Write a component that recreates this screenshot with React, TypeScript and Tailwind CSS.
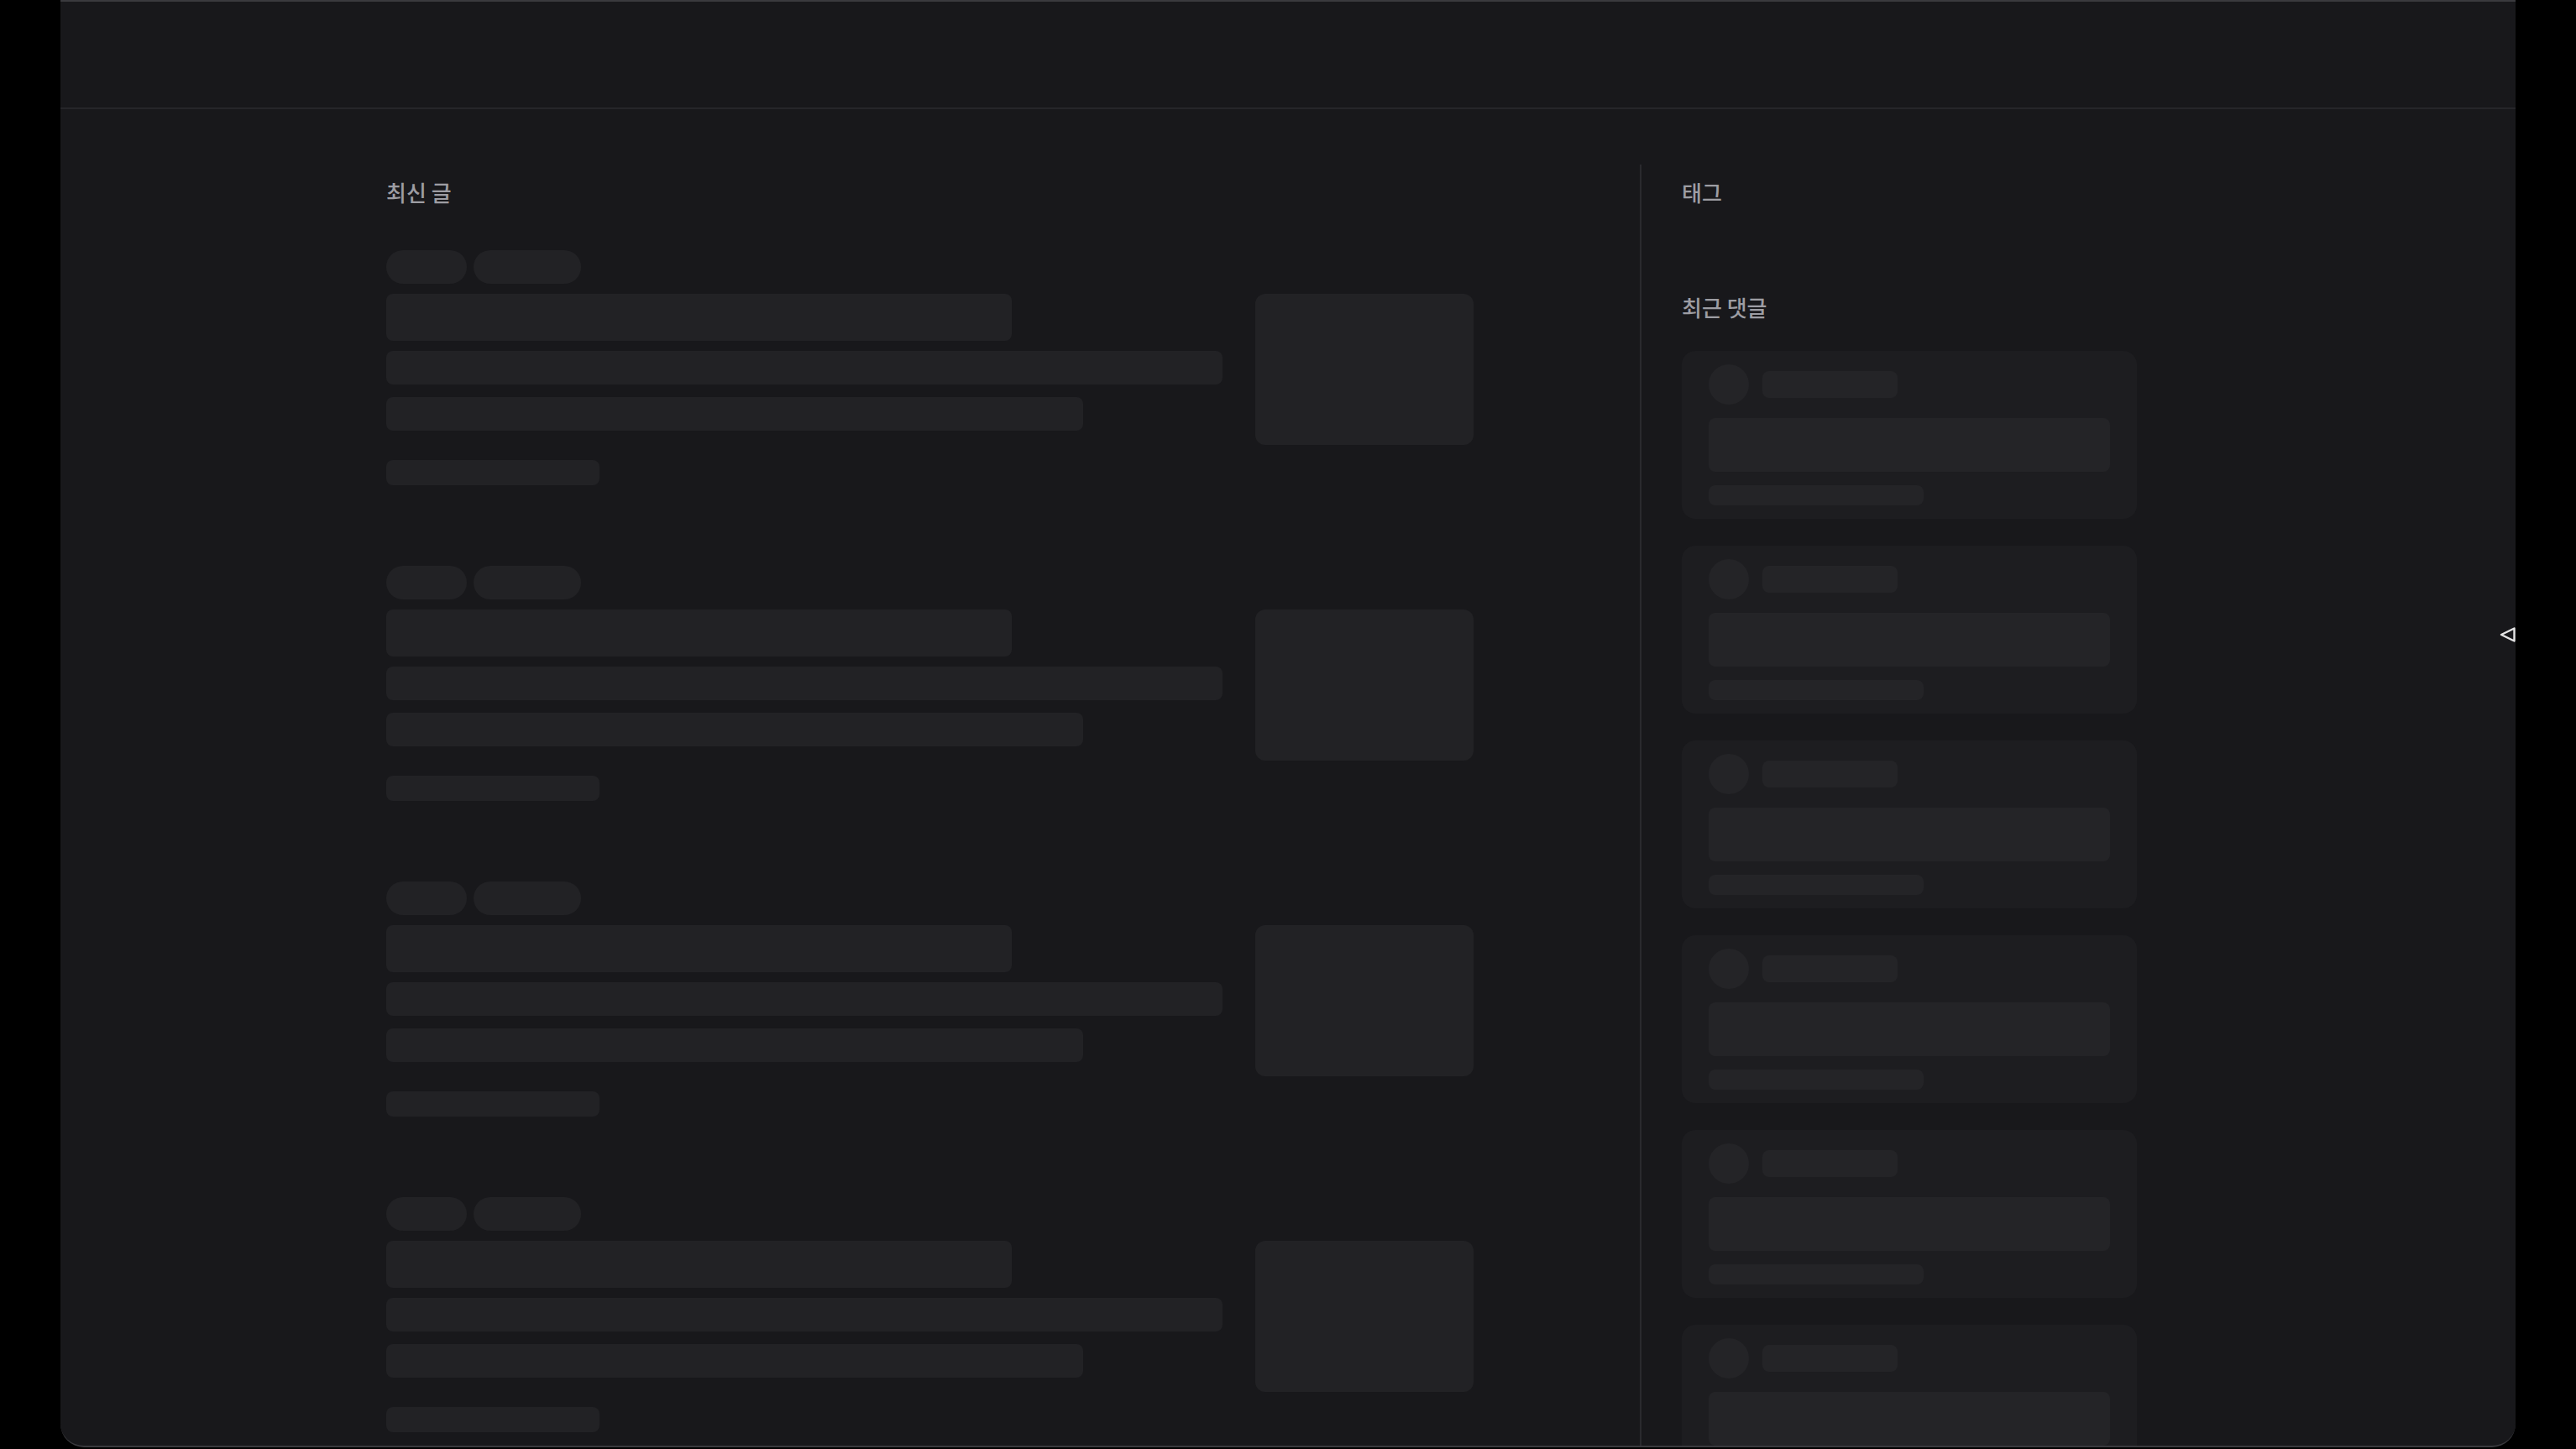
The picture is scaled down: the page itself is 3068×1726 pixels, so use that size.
const posts = [0, 1, 2, 3];
const comments = [0, 1, 2, 3, 4, 5];

function PostSkeleton() {
  return (
    <div className="flex flex-col">
      {/* category + date pills */}
      <div className="flex gap-2">
        <div className="h-10 w-[96px] rounded-full bg-[#222225]"></div>
        <div className="h-10 w-[128px] rounded-full bg-[#222225]"></div>
      </div>
      <div className="mt-3 flex gap-[39px]">
        <div className="flex w-[996px] flex-col">
          <div className="h-14 w-[745px] rounded-lg bg-[#222225]"></div>
          <div className="mt-3 h-10 w-full rounded-lg bg-[#222225]"></div>
          <div className="mt-[15px] h-10 w-[830px] rounded-lg bg-[#222225]"></div>
          <div className="mt-[35px] h-[30px] w-[254px] rounded-lg bg-[#222225]"></div>
        </div>
        {/* thumbnail */}
        <div className="h-[180px] w-[260px] rounded-xl bg-[#222225]"></div>
      </div>
    </div>
  );
}

function CommentSkeleton() {
  return (
    <div className="flex h-[200px] w-[542px] shrink-0 flex-col rounded-2xl bg-[#1d1d20] px-8 py-4">
      <div className="flex items-center gap-4">
        <div className="h-12 w-12 rounded-full bg-[#242427]"></div>
        <div className="h-8 w-[161px] rounded-lg bg-[#242427]"></div>
      </div>
      <div className="mt-4 h-16 w-full rounded-lg bg-[#242427]"></div>
      <div className="mt-4 h-6 w-[256px] rounded-lg bg-[#242427]"></div>
    </div>
  );
}

export default function App() {
  return (
    <div
      className="flex h-[1726px] w-full overflow-hidden bg-black"
      style={{ fontFamily: '"Noto Sans CJK KR", "Noto Sans", sans-serif' }}
    >
      <div className="ml-[72px] flex h-[1724px] w-[2924px] flex-col overflow-hidden rounded-b-[28px] border-t-2 border-b-2 border-[#3a3a3e] bg-[#18181b]">
        {/* header */}
        <div className="h-[128px] shrink-0 border-b-2 border-[#26262a]"></div>

        <div className="relative flex flex-1 overflow-hidden">
          <div className="mt-[66px] flex pl-[388px]">
            {/* 최신 글 */}
            <div className="w-[1493px] shrink-0 pt-4 pr-[198px]">
              <h2 className="h-[34px] text-[26px] leading-[34px] font-medium text-[#9d9da3]">최신 글</h2>
              <div className="mt-[52px] flex flex-col gap-[96px]">
                {posts.map((p) => (
                  <PostSkeleton key={p} />
                ))}
              </div>
            </div>

            {/* sidebar */}
            <div className="shrink-0 border-l-2 border-[#2a2a2e] pt-4 pl-[48px]">
              <h2 className="h-[34px] text-[26px] leading-[34px] font-medium text-[#9d9da3]">태그</h2>
              <h2 className="mt-[103px] h-[34px] text-[26px] leading-[34px] font-medium text-[#9d9da3]">최근 댓글</h2>
              <div className="mt-[35px] flex flex-col gap-8">
                {comments.map((c) => (
                  <CommentSkeleton key={c} />
                ))}
              </div>
            </div>
          </div>

          {/* drawer toggle */}
          <svg
            className="absolute top-[616px] right-0"
            width="20"
            height="20"
            viewBox="0 0 20 20"
            fill="none"
          >
            <path d="M18.5 2.5 L3 10 L18.5 17.5 Z" stroke="#e5e5e5" strokeWidth="2.4" strokeLinejoin="round" />
          </svg>
        </div>
      </div>
    </div>
  );
}
